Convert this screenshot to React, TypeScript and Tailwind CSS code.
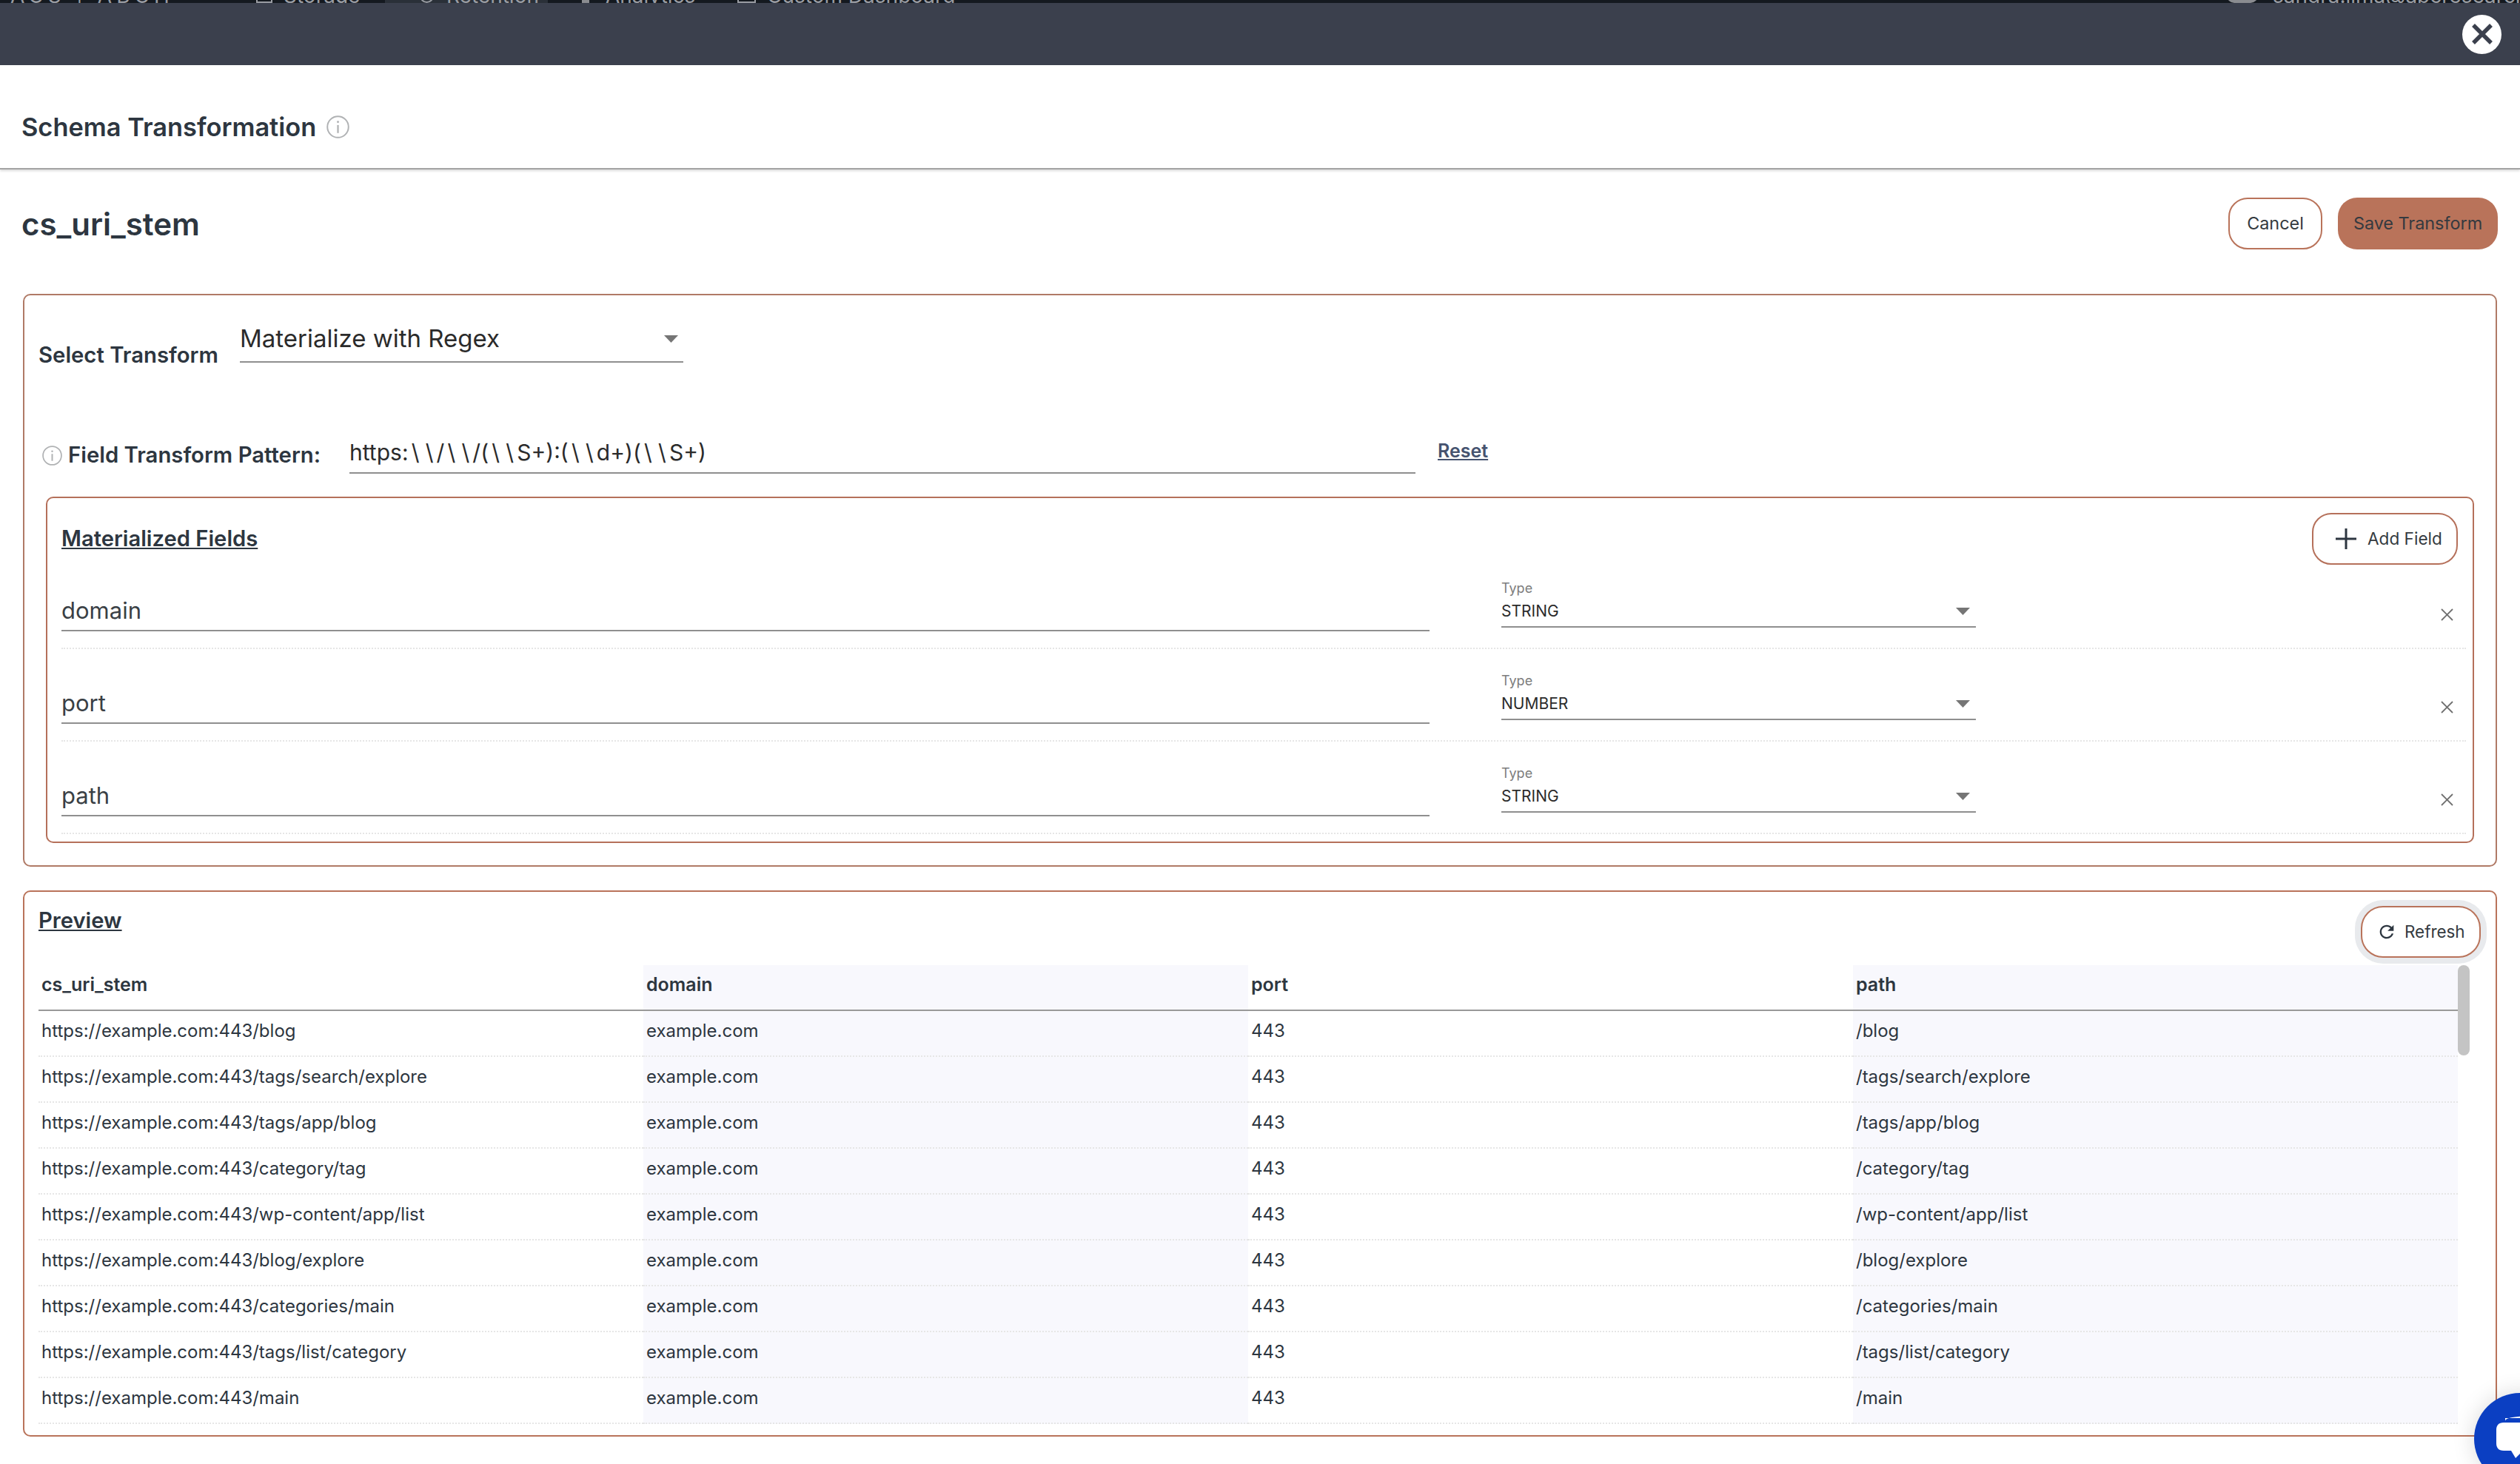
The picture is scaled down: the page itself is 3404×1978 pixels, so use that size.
import React from "react";

const ink = "text-[#2d3640]";

const InfoIcon = ({ size }: { size: number }) => (
  <svg width={size} height={size} viewBox="0 0 30 30" fill="none" className="shrink-0">
    <circle cx="15" cy="15" r="13.8" stroke="#b0b2b4" strokeWidth="1.9" />
    <circle cx="15" cy="8.5" r="1.4" fill="#b0b2b4" />
    <path d="M15 12.5V23" stroke="#b0b2b4" strokeWidth="2.2" />
  </svg>
);

const Arrow = () => (
  <svg width="19" height="10" viewBox="0 0 19 10" className="shrink-0">
    <path d="M0 0H19L9.5 10Z" fill="#757575" />
  </svg>
);

const fields = [
  ["domain", "STRING"],
  ["port", "NUMBER"],
  ["path", "STRING"],
];

const paths = [
  "/blog",
  "/tags/search/explore",
  "/tags/app/blog",
  "/category/tag",
  "/wp-content/app/list",
  "/blog/explore",
  "/categories/main",
  "/tags/list/category",
  "/main",
];

const pattern = "https:\\\\/\\\\/(\\\\S+):(\\\\d+)(\\\\S+)";

const Cell = ({ shaded, bold, children }: { shaded: boolean; bold?: boolean; children: React.ReactNode }) => (
  <div
    className={`flex h-[62px] items-center pb-[6px] pl-[4px] ${bold ? "border-b-2 border-solid border-[#999999] text-[25px] font-semibold" : "border-b-2 border-dotted border-[#e6e6e6] text-[24px]"} ${shaded ? "bg-[#f8f8fd]" : "bg-white"} ${ink}`}
  >
    {children}
  </div>
);

export default function App() {
  return (
    <div className="relative flex h-[1978px] w-[3404px] flex-col overflow-hidden bg-white font-['Inter',sans-serif]">
      <div className="flex h-[4px] items-end overflow-hidden bg-[#14191f] text-[28px] leading-[20px] text-[#9a9da3]">
        <span className="w-[346px] whitespace-nowrap pl-[14px] tracking-[6px]">ACS | ABCH</span>
        <span className="h-[20px] w-[22px] border-2 border-[#9a9da3]" />
        <span className="ml-[15px] w-[137px]">Storage</span>
        <span className="flex h-[20px] w-[220px] items-end bg-[#2a3038] pl-[47px]">
          <span className="h-[20px] w-[19px] rounded-full border-2 border-[#9a9da3]" />
          <span className="ml-[17px]">Retention</span>
        </span>
        <span className="ml-[46px] h-[20px] w-[10px] bg-[#8a8c90]" />
        <span className="ml-[22px] w-[178px]">Analytics</span>
        <span className="h-[20px] w-[25px] border-2 border-[#9a9da3]" />
        <span className="ml-[15px] whitespace-nowrap">Custom Dashboard</span>
        <span className="ml-auto mr-[20px] h-[20px] w-[42px] shrink-0 rounded-full bg-[#8a8c90]" />
        <span className="w-[334px] shrink-0 overflow-hidden whitespace-nowrap">sandra.lima@abcresearch.com</span>
      </div>
      <div className="flex h-[84px] items-center justify-end bg-[#3b404d] pr-[25px]">
        <div className="flex h-[53px] w-[53px] items-center justify-center rounded-full bg-white">
          <svg width="28" height="28" viewBox="0 0 28 28">
            <path d="M2 2L26 26M26 2L2 26" stroke="#3b404d" strokeWidth="5.5" />
          </svg>
        </div>
      </div>
      <div className="flex h-[141px] items-center gap-[14px] border-b-2 border-[#a3a3a3] pl-[29px] pt-[28px] shadow-[0_2px_3px_rgba(0,0,0,0.15)]">
        <h1 className={`text-[34.4px] font-semibold ${ink}`}>Schema Transformation</h1>
        <InfoIcon size={31} />
      </div>
      <div className="flex h-[108px] items-center justify-between pl-[29px] pr-[30px] pt-[38px]">
        <h2 className={`text-[42px] font-semibold ${ink}`}>cs_uri_stem</h2>
        <div className="flex gap-[21px] text-[23.4px] text-[#343a40]">
          <button className="flex h-[70px] w-[127px] items-center justify-center rounded-[26px] border-2 border-[#b9735a] bg-white">Cancel</button>
          <button className="flex h-[70px] w-[216px] items-center justify-center rounded-[26px] bg-[#b9735a]">Save Transform</button>
        </div>
      </div>
      <div className="mx-[31px] mt-[60px] h-[774px] rounded-[10px] border-2 border-[#b07a66]">
        <div className="ml-[19px] mt-[32px] flex h-[69px] gap-[31px]">
          <span className={`w-[241px] self-end whitespace-nowrap text-[29.3px] font-semibold leading-[40px] ${ink}`}>Select Transform</span>
          <div className="flex h-[59px] w-[599px] items-center justify-between border-b-2 border-[#8f8f8f] pb-[4px] pr-[7px] text-[33px] text-[#2b2b2b]">
            <span>Materialize with Regex</span>
            <Arrow />
          </div>
        </div>
        <div className="ml-[24px] mt-[90px] flex h-[50px] items-start">
          <span className="mt-[12px]"><InfoIcon size={27} /></span>
          <span className={`ml-[8px] mt-[5px] whitespace-nowrap text-[29.3px] font-semibold leading-[40px] ${ink}`}>Field Transform Pattern:</span>
          <div className="ml-auto flex h-[50px] w-[1440px] items-center border-b-2 border-[#8f8f8f] pb-[6px] text-[30px] text-[#2b2b2b]">
            <span>
              {pattern.split("").map((ch, i) =>
                ch === "\\" ? (
                  <span key={i} className="px-[4.1px]">{ch}</span>
                ) : (
                  <React.Fragment key={i}>{ch}</React.Fragment>
                ),
              )}
            </span>
          </div>
          <a className="ml-[30px] mr-[1361px] mt-[-1px] w-[68px] shrink-0 whitespace-nowrap text-[25px] font-semibold leading-[40px] text-[#46536f] underline">Reset</a>
        </div>
        <div className="ml-[29px] mr-[29px] mt-[31px] h-[468px] rounded-[10px] border-2 border-[#b5705a] pl-[19px] pr-[9px]">
          <div className="flex h-[79px] items-start justify-between pr-[11px] pt-[20px]">
            <span className={`flex h-[70px] items-center text-[29.2px] font-semibold underline ${ink}`}>Materialized Fields</span>
            <button className="z-10 flex h-[70px] w-[197px] items-center gap-[15px] rounded-[26px] border-2 border-[#b5705a] bg-white pl-[30px] text-[22.6px] text-[#343a40]">
              <svg width="28" height="28" viewBox="0 0 28 28" className="shrink-0">
                <path d="M14 0V28M0 14H28" stroke="#2d3640" strokeWidth="3" />
              </svg>
              <span className="whitespace-nowrap">Add Field</span>
            </button>
          </div>
          {fields.map(([name, type]) => (
            <div key={name} className="flex h-[125px] items-start border-b-2 border-dotted border-[#e6e6e6]">
              <div className="mt-[48px] flex h-[53px] w-[1848px] items-center border-b-2 border-[#8f8f8f] text-[31px] text-[#3a3f45]">{name}</div>
              <div className="ml-[97px] mt-[32px] w-[641px]">
                <div className="text-[18px] leading-[22px] text-[#7d7d7d]">Type</div>
                <div className="flex h-[42px] items-center justify-between border-b-2 border-[#8f8f8f] pr-[8px] text-[21px] text-[#2b2b2b]">
                  <span>{type}</span>
                  <Arrow />
                </div>
              </div>
              <svg width="17" height="17" viewBox="0 0 17 17" className="ml-auto mr-[17px] mt-[70px] shrink-0">
                <path d="M1 1L16 16M16 1L1 16" stroke="#6f6f6f" strokeWidth="1.8" />
              </svg>
            </div>
          ))}
        </div>
      </div>
      <div className="mx-[31px] mt-[32px] h-[738px] rounded-[10px] border-2 border-[#b9735a]">
        <div className="flex h-[99px] items-start justify-between pl-[19px] pr-[20px] pt-[19px]">
          <span className={`text-[29.2px] font-semibold leading-[40px] underline ${ink}`}>Preview</span>
          <button className="flex h-[70px] w-[162px] items-center gap-[10px] rounded-[30px] border-2 border-[#b9735a] bg-white pl-[19px] text-[22.4px] text-[#343a40] shadow-[0_0_0_8px_#e8eaed]">
            <svg width="28" height="28" viewBox="0 0 24 24" className="shrink-0">
              <path fill="#2d3640" d="M17.65 6.35C16.2 4.9 14.21 4 12 4c-4.42 0-7.99 3.58-7.99 8s3.57 8 7.99 8c3.73 0 6.84-2.55 7.73-6h-2.08c-.82 2.33-3.04 4-5.65 4-3.31 0-6-2.69-6-6s2.69-6 6-6c1.66 0 3.14.69 4.22 1.78L13 11h7V4l-2.35 2.35z" />
            </svg>
            <span>Refresh</span>
          </button>
        </div>
        <div className="ml-[19px] flex items-start">
          <div className="grid w-[3268px] grid-cols-4">
            {["cs_uri_stem", "domain", "port", "path"].map((h, i) => (
              <Cell key={h} shaded={i % 2 === 1} bold>{h}</Cell>
            ))}
            {paths.map((p) => (
              <React.Fragment key={p}>
                <Cell shaded={false}>{`https://example.com:443${p}`}</Cell>
                <Cell shaded>example.com</Cell>
                <Cell shaded={false}>443</Cell>
                <Cell shaded>{p}</Cell>
              </React.Fragment>
            ))}
          </div>
          <div className="h-[122px] w-[16px] rounded-[8px] bg-[#c4c4c4]" />
        </div>
      </div>
      <div className="absolute left-[3342px] top-[1882px] h-[124px] w-[124px] rounded-full bg-[#0b3fc2] shadow-[0_0_30px_rgba(0,0,0,0.15)]">
        <svg width="82" height="66" viewBox="0 0 82 66" className="absolute left-[30px] top-[30px]">
          <path d="M12 8C12 3 30 1 60 1V4H12Z" fill="#fff" />
          <path d="M10 10H70V48H36L26 58L20 48H10C3 48 0 44 0 38V20C0 14 3 10 10 10Z" fill="#fff" />
        </svg>
      </div>
    </div>
  );
}
